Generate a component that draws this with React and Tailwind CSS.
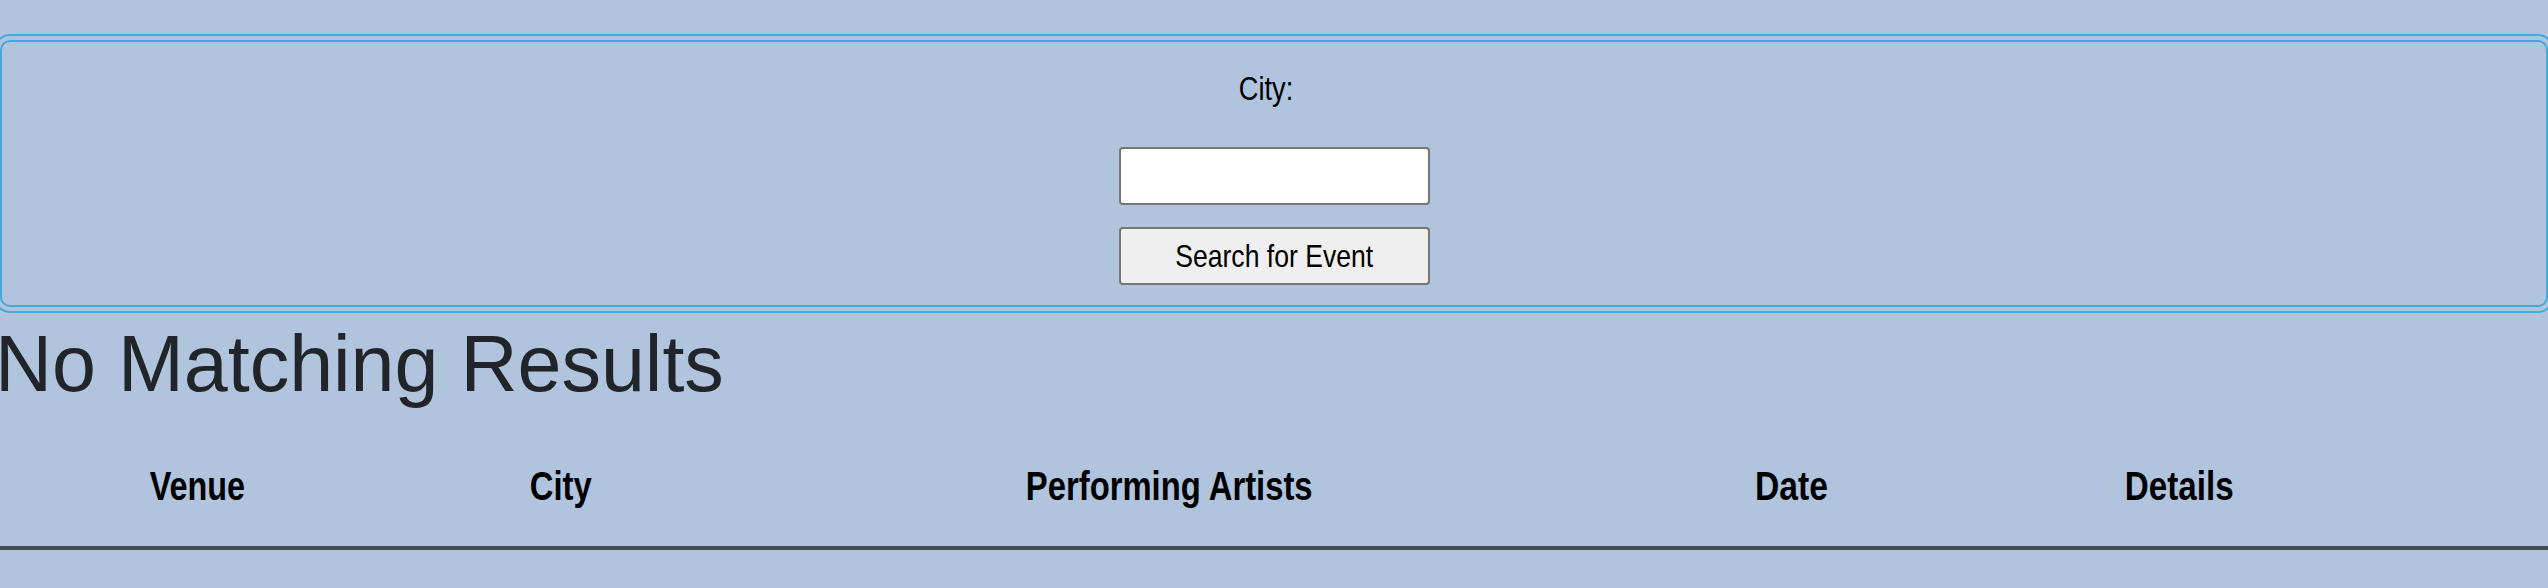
import React from "react";

const headers = [
  { label: "Venue", scale: "scale-x-[0.79]" },
  { label: "City", scale: "scale-x-[0.8]" },
  { label: "Performing Artists", scale: "scale-x-[0.8]" },
  { label: "Date", scale: "scale-x-[0.82]" },
  { label: "Details", scale: "scale-x-[0.81]" },
];

export default function App() {
  return (
    <div className="min-h-screen w-full overflow-hidden bg-[#b0c4de] pt-[40px] font-['Liberation_Sans',Arial,sans-serif] text-black">
      <form
        className="flex flex-col items-center rounded-[10px] border-2 border-[#42abdd] outline-2 outline-offset-4 outline-[#42abdd] pt-[26px] pb-[20px]"
        onSubmit={(e) => e.preventDefault()}
      >
        <label
          htmlFor="city"
          className="mr-[17px] inline-block origin-center scale-x-[0.8] text-[34px] leading-[40px]"
        >
          City:
        </label>
        <input
          id="city"
          type="text"
          className="mt-[39px] h-[58px] w-[311px] rounded-[4px] border-2 border-[#767676] bg-white"
        />
        <button
          type="submit"
          className="mt-[22px] flex h-[58px] w-[311px] items-center justify-center rounded-[4px] border-2 border-[#767676] bg-[#efefef]"
        >
          <span className="inline-block origin-center scale-x-[0.83] whitespace-nowrap text-[32px] leading-[36px]">
            Search for Event
          </span>
        </button>
      </form>

      <h1 className="mt-[12px] mb-[17px] -ml-[5px] whitespace-nowrap text-[79px] leading-[90px] font-normal text-[#212529]">
        No Matching Results
      </h1>

      <div className="grid grid-cols-[394px_333px_885px_358px_419px_1fr] border-b-4 border-[#434b4b] py-[36px]">
        {headers.map((h) => (
          <div key={h.label} className="flex justify-center">
            <span
              className={`inline-block origin-center whitespace-nowrap text-[41px] font-bold leading-[48px] ${h.scale}`}
            >
              {h.label}
            </span>
          </div>
        ))}
        <div />
      </div>
    </div>
  );
}
